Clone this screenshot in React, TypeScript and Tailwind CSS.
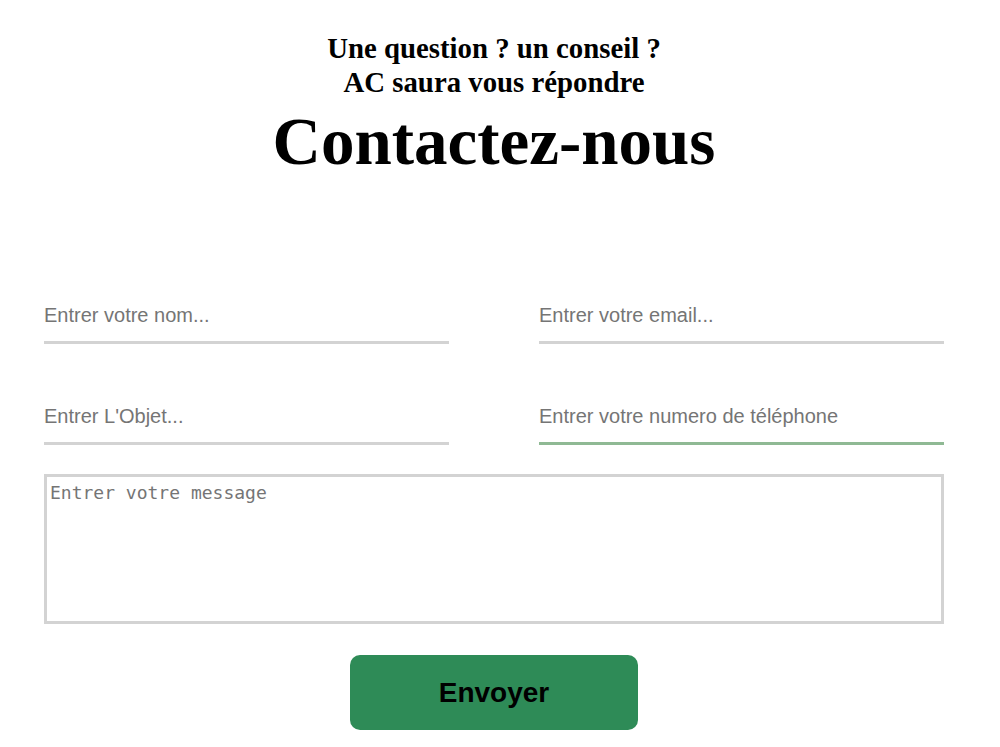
export default function App() {
  return (
    <div className="w-[988px] bg-white">
      <header className="pt-[31px] text-center font-['Liberation_Serif',serif] font-bold text-black">
        <h2 className="text-[28.8px] leading-[34px]">
          Une question ? un conseil ?
          <br />
          AC saura vous répondre
        </h2>
        <h1 className="mt-[4px] text-[67px] leading-[77px]">Contactez-nous</h1>
      </header>

      <form className="mx-[44px] mt-[110px] font-['Liberation_Sans',sans-serif]">
        <div className="grid grid-cols-2 gap-x-[90px] gap-y-[47px]">
          <input
            placeholder="Entrer votre nom..."
            className="h-[54px] border-b-[3px] border-[#d3d3d3] text-[20px] outline-none placeholder:text-[#757575]"
          />
          <input
            placeholder="Entrer votre email..."
            className="h-[54px] border-b-[3px] border-[#d3d3d3] text-[20px] outline-none placeholder:text-[#757575]"
          />
          <input
            placeholder="Entrer L'Objet..."
            className="h-[54px] border-b-[3px] border-[#d3d3d3] text-[20px] outline-none placeholder:text-[#757575]"
          />
          <input
            placeholder="Entrer votre numero de téléphone"
            className="h-[54px] border-b-[3px] border-[#8fb994] text-[20px] outline-none placeholder:text-[#757575]"
          />
        </div>
        <textarea
          placeholder="Entrer votre message"
          className="mt-[29px] block h-[150px] w-full resize-none border-[3px] border-[#d3d3d3] px-[3px] py-[2px] font-['DejaVu_Sans_Mono',monospace] text-[18px] outline-none placeholder:text-[#757575]"
        />
        <div className="mt-[31px] flex justify-center">
          <button
            type="button"
            className="h-[75px] w-[288px] rounded-[10px] bg-[#2e8b57] text-[28px] font-bold text-black"
          >
            Envoyer
          </button>
        </div>
      </form>
    </div>
  );
}
